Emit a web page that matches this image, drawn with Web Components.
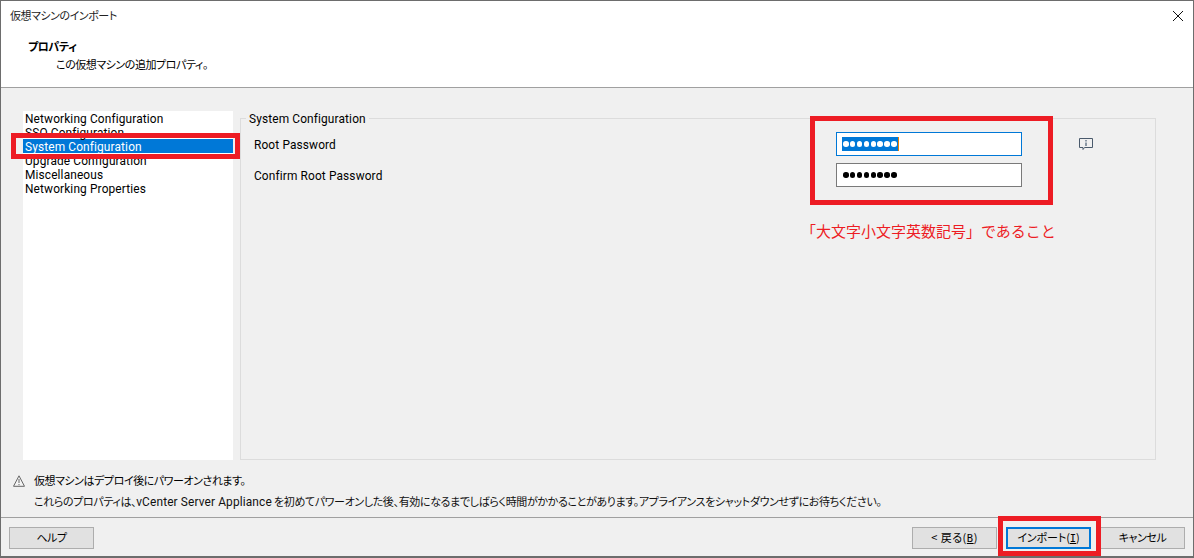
<!DOCTYPE html>
<html lang="ja"><head><meta charset="utf-8">
<style>
html,body{margin:0;padding:0;background:#f0f0f0}
body{width:1194px;height:558px;overflow:hidden;font:11px/14px "Noto Sans CJK JP",sans-serif;font-feature-settings:"palt";letter-spacing:-.45px;color:#000}
</style></head><body>
<x-dialog>
  <x-wizard-header slot="head" caption="仮想マシンのインポート" title-text="プロパティ" sub="この仮想マシンの追加プロパティ。"></x-wizard-header>
  <x-nav-list slot="nav">
    <x-nav-item>Networking Configuration</x-nav-item>
    <x-nav-item>SSO Configuration</x-nav-item>
    <x-nav-item selected>System Configuration</x-nav-item>
    <x-nav-item>Upgrade Configuration</x-nav-item>
    <x-nav-item>Miscellaneous</x-nav-item>
    <x-nav-item>Networking Properties</x-nav-item>
  </x-nav-list>
  <x-group slot="main" legend="System Configuration">
    <x-field label="Root Password" focused info></x-field>
    <x-field label="Confirm Root Password"></x-field>
  </x-group>
  <x-notes slot="notes"></x-notes>
  <x-footer slot="foot"></x-footer>
  <x-mark slot="marks" style="left:10px;top:132px;width:229px;height:26px;--w:5px"></x-mark>
  <x-mark slot="marks" style="left:809px;top:115px;width:243px;height:89px;--w:5px"></x-mark>
  <x-mark slot="marks" style="left:997px;top:515px;width:103px;height:40px;--w:5px"></x-mark>
  <x-note slot="marks" style="left:800px;top:220px">「大文字小文字英数記号」であること</x-note>
</x-dialog>
<script>
const LATIN='font-family:Roboto,"Noto Sans CJK JP",sans-serif;font-size:11.9px;letter-spacing:.13px;';
function def(name,html,init){
  customElements.define(name,class extends HTMLElement{
    constructor(){super();this.attachShadow({mode:'open'}).innerHTML=html;}
    connectedCallback(){if(init)init(this,this.shadowRoot);}
  });
}
def('x-dialog',`<style>
:host{display:flex;flex-direction:column;position:relative;box-sizing:border-box;width:1194px;height:558px;border:1px solid #6d6d6d;border-bottom-width:2px;background:#f0f0f0}
.head{flex:none}
.mid{flex:none;display:flex;height:349px;padding:23px 37px 0 22px;gap:7px}
.notes{flex:none}
</style>
<div class="head"><slot name="head"></slot></div>
<div class="mid"><slot name="nav"></slot><slot name="main"></slot></div>
<div class="notes"><slot name="notes"></slot></div>
<slot name="foot"></slot>
<slot name="marks"></slot>`);
def('x-wizard-header',`<style>
:host{display:block;height:86px;background:#fff;border-bottom:1px solid #a0a0a0;position:relative}
.cap{padding:7px 0 0 9px;height:23px;line-height:14px;color:#222}
.t{padding:8px 0 0 27px;font-weight:bold;line-height:14px}
.s{padding:4px 0 0 55px;line-height:14px}
svg{position:absolute;right:9px;top:9px}
</style><div class="cap"></div><div class="t"></div><div class="s"></div>
<svg width="12" height="12" viewBox="0 0 12 12"><path d="M1 1 11 11M11 1 1 11" stroke="#111" stroke-width="1" fill="none"/></svg>`,(h,s)=>{
  s.querySelector('.cap').textContent=h.getAttribute('caption');
  s.querySelector('.t').textContent=h.getAttribute('title-text');
  s.querySelector('.s').textContent=h.getAttribute('sub');
});
def('x-nav-list',`<style>:host{display:block;box-sizing:border-box;width:210px;height:349px;background:#fff;padding-top:0}</style><slot></slot>`);
def('x-nav-item',`<style>
:host{display:block;height:14px;line-height:16px;padding-left:2px;white-space:nowrap;${LATIN}}
:host([selected]){background:#0078d7;color:#fff}
</style><slot></slot>`);
def('x-group',`<style>
:host{display:block;box-sizing:border-box;width:916px;height:342px;margin-top:7px;border:1px solid #dcdcdc;position:relative;padding:10px 0 0 13px}
.lg{position:absolute;left:5px;top:-8px;height:14px;background:#f0f0f0;padding:0 3px;line-height:16px;white-space:nowrap;${LATIN}}
</style><div class="lg"></div><slot></slot>`,(h,s)=>{s.querySelector('.lg').textContent=h.getAttribute('legend');});
def('x-field',`<style>
:host{display:flex;align-items:flex-start;height:31px;position:relative;white-space:nowrap}
.l{width:582px;flex:none;margin-top:9px;${LATIN}}
.i{box-sizing:border-box;width:186px;height:24px;margin-top:3px;background:#fff;border:1px solid #7a7a7a;padding:0 0 0 5px;display:flex;align-items:center}
:host([focused]) .i{border-color:#0078d7}
.d{display:inline-flex;gap:1.4px;height:14px;align-items:center;padding-left:1px;padding-right:1px}
:host([focused]) .d{background:#0078d7;border-right:1px solid #f08000}
.d b{width:5.5px;height:5.5px;border-radius:50%;background:#000;display:block}
:host([focused]) .d b{background:#fff}
svg{margin:9px 0 0 57px;flex:none}
</style><div class="l"></div><div class="i"><span class="d"><b></b><b></b><b></b><b></b><b></b><b></b><b></b><b></b></span></div>
<svg class="ic" width="14" height="13" viewBox="0 0 14 13"><path d="M.5.5h13v9h-8l-1.500 2v-2h-3.500z" fill="none" stroke="#4a5a6c"/><path d="M6 2h2v1.500h-2zM6 4.500h2v3.500h-2z" fill="#8a96a3"/></svg>`,(h,s)=>{
  s.querySelector('.l').textContent=h.getAttribute('label');
  if(!h.hasAttribute('info'))s.querySelector('.ic').remove();
});
def('x-notes',`<style>
:host{display:block;height:57px;box-sizing:border-box;padding:13px 0 0 12px;position:relative;white-space:nowrap}
.r{display:flex;align-items:center;height:14px}
.r2{padding-left:21px;margin-top:7px;height:14px;color:#111;letter-spacing:-.36px}
.lat{${LATIN}}
svg{margin:2px 9px 0 0}
</style><div class="r"><svg width="12" height="12" viewBox="0 0 12 12"><path d="M6 .8 11.500 11.300H.5z" fill="#f4f4f4" stroke="#666"/><path d="M6 4v4M6 9v1.200" stroke="#666"/></svg>仮想マシンはデプロイ後にパワーオンされます。</div>
<div class="r2">これらのプロパティは、<span class="lat">vCenter Server Appliance</span> を初めてパワーオンした後、有効になるまでしばらく時間がかかることがあります。アプライアンスをシャットダウンせずにお待ちください。</div>`);
def('x-footer',`<style>
:host{display:flex;box-sizing:border-box;height:40px;border-top:1px solid #a0a0a0;padding:9px 8px 0 8px;gap:9px}
.sp{flex:1}
u{font-family:"DejaVu Sans Mono",monospace;font-size:10.5px}
.w{letter-spacing:.5px}
</style><x-btn>ヘルプ</x-btn><div class="sp"></div><x-btn><span class="w">&lt; 戻る(<u>B</u>)</span></x-btn><x-btn default><span style="letter-spacing:-.1px">インポート(<u>I</u>)</span></x-btn><x-btn>キャンセル</x-btn>`);
def('x-btn',`<style>
:host{display:flex;align-items:center;justify-content:center;box-sizing:border-box;width:85px;height:22px;padding-bottom:2px;background:#e1e1e1;border:1px solid #adadad;white-space:nowrap}
:host([default]){border:2px solid #0078d7}
</style><slot></slot>`);
def('x-mark',`<style>:host{display:block;position:absolute;box-sizing:border-box;border:var(--w) solid #ed1c24}</style>`);
def('x-note',`<style>:host{display:block;position:absolute;color:#ed1c24;font-size:15px;line-height:20px;white-space:nowrap;font-feature-settings:normal;letter-spacing:0}</style><slot></slot>`);
</script>
</body></html>
